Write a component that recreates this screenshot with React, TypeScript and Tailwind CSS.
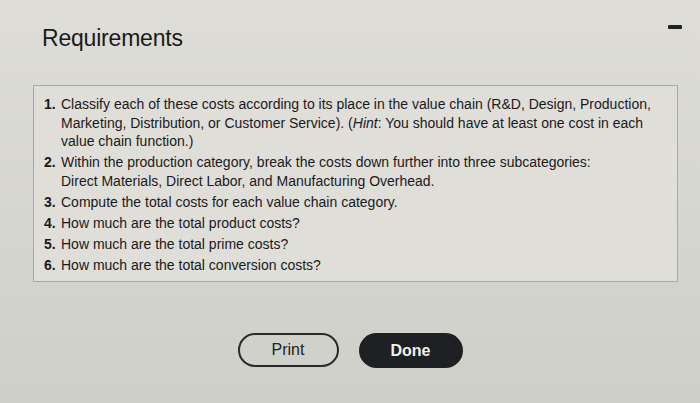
const items: { n: number; body: React.ReactNode }[] = [
  {
    n: 1,
    body: (
      <>
        Classify each of these costs according to its place in the value chain (R&amp;D, Design, Production,
        Marketing, Distribution, or Customer Service). (<i>Hint</i>: You should have at least one cost in each
        value chain function.)
      </>
    ),
  },
  {
    n: 2,
    body: (
      <>
        Within the production category, break the costs down further into three subcategories:
        <br />
        Direct Materials, Direct Labor, and Manufacturing Overhead.
      </>
    ),
  },
  { n: 3, body: 'Compute the total costs for each value chain category.' },
  { n: 4, body: 'How much are the total product costs?' },
  { n: 5, body: 'How much are the total prime costs?' },
  { n: 6, body: 'How much are the total conversion costs?' },
];

export default function App() {
  return (
    <div className="w-[700px] h-[403px] overflow-hidden bg-gradient-to-b from-[#deddd8] to-[#cfcfca] font-['Liberation_Sans',Arial,sans-serif] text-[#1a1a1a]">
      <div className="flex items-start justify-between pl-[42px] pr-[18px] pt-[24px]">
        <h1 className="text-[23px] leading-[28px] tracking-[-0.2px]">Requirements</h1>
        <div className="mt-[1px] h-[4px] w-[14px] rounded-[1px] bg-[#222]" />
      </div>

      <div className="ml-[33px] mr-[22px] mt-[33px] h-[197px] border border-[#a9a9a5] bg-[#dfded9] pl-[10px] pt-[9px]">
        <ol className="flex flex-col gap-[2.5px] text-[14px] leading-[18.5px]">
          {items.map((it) => (
            <li key={it.n} className="flex">
              <span className="w-[17px] shrink-0 font-bold">{it.n}.</span>
              <span className="pr-[16px]">{it.body}</span>
            </li>
          ))}
        </ol>
      </div>

      <div className="mt-[51px] flex justify-center gap-[20px]">
        <button className="h-[34px] w-[101px] rounded-full border-2 border-[#2a2a2a] text-[16px] text-[#222]">
          Print
        </button>
        <button className="h-[35px] w-[104px] rounded-full bg-[#1f2023] text-[16px] font-bold text-[#f2f2f2]">
          Done
        </button>
      </div>
    </div>
  );
}
